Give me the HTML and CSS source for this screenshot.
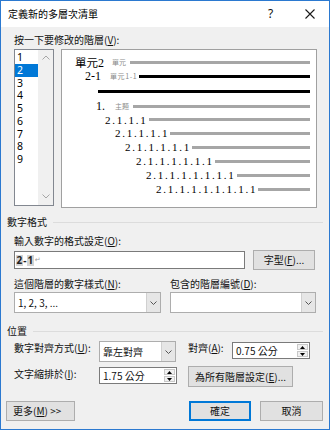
FILE: index.html
```html
<!DOCTYPE html>
<html lang="zh-Hant">
<head>
<meta charset="utf-8">
<link rel="stylesheet" href="styles.css">
</head>
<body>
<div class="win">
  <div class="titlebar">
    <span class="title">定義新的多層次清單</span>
    <span class="help">?</span>
    <svg class="close" width="10" height="10" viewBox="0 0 10 10"><path d="M0.5 0.5L9.5 9.5M9.5 0.5L0.5 9.5" stroke="#1a1a1a" stroke-width="1.1" fill="none"/></svg>
  </div>
  <div class="content">
    <div class="l-click">按一下要修改的階層(<u>V</u>):</div>
    <div class="top">
      <div class="listbox">
        <ul class="items">
          <li>1</li><li class="sel">2</li><li>3</li><li>4</li><li>5</li><li>6</li><li>7</li><li>8</li><li>9</li>
        </ul>
        <div class="vscroll">
          <svg width="8" height="5" viewBox="0 0 8 5"><path d="M0.5 4.5L4 1L7.5 4.5" stroke="#a6a6a6" fill="none"/></svg>
          <svg width="8" height="5" viewBox="0 0 8 5"><path d="M0.5 0.5L4 4L7.5 0.5" stroke="#a6a6a6" fill="none"/></svg>
        </div>
      </div>
      <div class="preview">
        <div class="pv r1"><span class="big">單元<span class="ser">2</span></span><span class="tag t1">單元</span><span class="bar"></span></div>
        <div class="pv r2"><span class="big ser">2-1</span><span class="tag t2">單元1-1</span><span class="bar blk b2"></span></div>
        <div class="pv r3"><span class="bar blk b3"></span></div>
        <div class="pv r4"><span class="big ser">1.</span><span class="tag t4">主題</span><span class="bar"></span></div>
        <div class="pv r5"><span class="seq">2.1.1.1</span><span class="bar"></span></div>
        <div class="pv r6"><span class="seq">2.1.1.1.1</span><span class="bar"></span></div>
        <div class="pv r7"><span class="seq">2.1.1.1.1.1</span><span class="bar"></span></div>
        <div class="pv r8"><span class="seq">2.1.1.1.1.1.1</span><span class="bar"></span></div>
        <div class="pv r9"><span class="seq">2.1.1.1.1.1.1.1</span><span class="bar"></span></div>
        <div class="pv r10"><span class="seq">2.1.1.1.1.1.1.1.1</span><span class="bar"></span></div>
      </div>
    </div>

    <div class="group g1">數字格式</div>
    <div class="l-fmt">輸入數字的格式設定(<u>O</u>):</div>
    <div class="fmt-row">
      <div class="fmt-input"><span class="fld">2</span><span class="dash">-</span><span class="fld">1</span><span class="ret">↵</span></div>
      <div class="btn btn-font">字型(<u>F</u>)...</div>
    </div>
    <div class="two-col style-labels">
      <div>這個階層的數字樣式(<u>N</u>):</div>
      <div>包含的階層編號(<u>D</u>):</div>
    </div>
    <div class="two-col selects">
      <div class="select"><span class="val">1, 2, 3, ...</span><span class="dd"><svg width="7" height="4" viewBox="0 0 7 4"><path d="M0.5 0.5L3.5 3.5L6.5 0.5" stroke="#555" fill="none"/></svg></span></div>
      <div class="select"><span class="val"></span><span class="dd"><svg width="7" height="4" viewBox="0 0 7 4"><path d="M0.5 0.5L3.5 3.5L6.5 0.5" stroke="#555" fill="none"/></svg></span></div>
    </div>

    <div class="group g2">位置</div>
    <div class="pos">
      <div class="p-lbl1">數字對齊方式(<u>U</u>):</div>
      <div class="select p-align"><span class="val">靠左對齊</span><span class="dd"><svg width="7" height="4" viewBox="0 0 7 4"><path d="M0.5 0.5L3.5 3.5L6.5 0.5" stroke="#555" fill="none"/></svg></span></div>
      <div class="p-lbl2">對齊(<u>A</u>):</div>
      <div class="spin p-at"><span class="val">0.75 公分</span><span class="arrows"><span class="ar"><svg width="5" height="3" viewBox="0 0 5 3"><path d="M0 3L2.5 0L5 3Z" fill="#000"/></svg></span><span class="ar"><svg width="5" height="3" viewBox="0 0 5 3"><path d="M0 0L2.5 3L5 0Z" fill="#000"/></svg></span></span></div>
      <div class="p-lbl3">文字縮排於(<u>I</u>):</div>
      <div class="spin p-indent"><span class="val">1.75 公分</span><span class="arrows"><span class="ar"><svg width="5" height="3" viewBox="0 0 5 3"><path d="M0 3L2.5 0L5 3Z" fill="#000"/></svg></span><span class="ar"><svg width="5" height="3" viewBox="0 0 5 3"><path d="M0 0L2.5 3L5 0Z" fill="#000"/></svg></span></span></div>
      <div class="btn p-all">為所有階層設定(<u>E</u>)...</div>
    </div>

    <div class="bottom">
      <div class="btn btn-more">更多(<u>M</u>) &gt;&gt;</div>
      <div class="spacer"></div>
      <div class="btn btn-ok">確定</div>
      <div class="btn btn-cancel">取消</div>
    </div>
  </div>
</div>
</body>
</html>
```
FILE: styles.css
```css
* { box-sizing: border-box; margin: 0; padding: 0; }
html, body { width: 330px; height: 430px; overflow: hidden; }
body {
  font-family: "Noto Sans CJK TC", "Noto Sans", sans-serif;
  font-size: 10px;
  line-height: 14px;
  color: #111;
  background: #f0f0f0;
}
u { text-decoration: underline; text-underline-offset: 1px; }

.win {
  width: 330px;
  height: 430px;
  border: 1px solid #2b79d0;
  background: #f0f0f0;
  display: flex;
  flex-direction: column;
}
.titlebar {
  flex: none;
  height: 26px;
  background: #fff;
  display: flex;
  align-items: center;
  padding-left: 7px;
}
.title { flex: 1; font-size: 10px; color: #000; }
.help {
  font-family: "Noto Sans", sans-serif;
  font-size: 12px;
  width: 6px;
  margin-right: 31px;
  color: #111;
}
.close { margin-right: 14px; }

.content {
  flex: 1;
  display: flex;
  flex-direction: column;
  padding: 0 6px 0 13px;
}
.l-click { margin-top: 6px; }

.top { display: flex; align-items: flex-start; gap: 7px; margin-top: 2px; }
.listbox {
  width: 40px;
  height: 157px;
  border: 1px solid #828790;
  background: #fff;
  display: flex;
}
.items { list-style: none; width: 23px; padding-top: 1px; }
.items li {
  height: 12.75px;
  line-height: 12.75px;
  padding-left: 2px;
  font-family: "Noto Sans", sans-serif;
  font-size: 10.5px;
  color: #000;
}
.items li.sel { background: #0078d7; color: #fff; }
.vscroll {
  flex: 1;
  background: #f0f0f0;
  display: flex;
  flex-direction: column;
  justify-content: space-between;
  align-items: center;
  padding: 5px 0 6px;
}

.preview {
  width: 256px;
  height: 159px;
  border: 1px solid #a0a0a0;
  background: #fff;
  padding: 5px 6px 0 0;
  color: #000;
}
.pv { display: flex; align-items: center; height: 14px; }
.r1 { padding-left: 13px; }
.r2 { padding-left: 23px; }
.r3 { padding-left: 36px; height: 16px; }
.r4 { padding-left: 34px; }
.r5 { padding-left: 43px; height: 13px; }
.r6 { padding-left: 53px; }
.r7 { padding-left: 63px; }
.r8 { padding-left: 74px; }
.r9 { padding-left: 84px; }
.r10 { padding-left: 94px; }
.big { font-size: 11.5px; }
.ser { font-family: "Liberation Serif", serif; font-size: 12px; }
.tag { font-size: 7px; color: #8c8c8c; line-height: 10px; }
.t1 { margin-left: 8px; }
.t2 { margin-left: 9px; letter-spacing: 0.6px; }
.t4 { margin-left: 10px; }
.bar { flex: 1; height: 3px; background: #a6a6a6; margin-left: 4px; }
.bar.blk { background: #000; }
.b2 { margin-left: 2px; }
.b3 { margin-left: 0; }
.seq {
  font-family: "Liberation Serif", serif;
  font-size: 11px;
  letter-spacing: 1.75px;
}
.seq + .bar { margin-left: 1px; }

.group {
  display: flex;
  align-items: center;
  gap: 6px;
  margin-left: -7px;
}
.group::after { content: ""; flex: 1; height: 1px; background: #dcdcdc; }
.g1 { margin-top: 7px; }
.g2 { margin-top: 11px; }

.l-fmt { margin-top: 5px; }
.fmt-row { display: flex; align-items: center; gap: 8px; height: 20px; margin-top: 2px; }
.fmt-input {
  width: 231px;
  height: 18px;
  border: 1px solid #7a7a7a;
  background: #fff;
  display: flex;
  align-items: center;
  padding-left: 1px;
  font-family: "Noto Sans", sans-serif;
  font-weight: 700;
  font-size: 10px;
  color: #222;
}
.fld { background: #d4d4d4; line-height: 11px; padding: 0 0.5px; }
.dash { padding: 0 0.5px; }
.ret { font-family: "DejaVu Sans", sans-serif; font-weight: 400; font-size: 7px; color: #999; margin-left: 1px; }

.btn {
  height: 20px;
  border: 1px solid #adadad;
  background: #e1e1e1;
  display: flex;
  align-items: center;
  justify-content: center;
  white-space: nowrap;
  color: #111;
}
.btn-font { width: 62px; }

.two-col { display: grid; grid-template-columns: 147px 146px; column-gap: 9px; }
.style-labels { margin-top: 7px; }
.selects { margin-top: 1px; }
.select {
  height: 21px;
  border: 1px solid #adadad;
  background: #fff;
  display: flex;
}
.select .val { flex: 1; padding-left: 3px; line-height: 19px; }
.select .dd {
  width: 14px;
  background: #e6e6e6;
  border-left: 1px solid #d0d0d0;
  display: flex;
  align-items: center;
  justify-content: center;
}

.pos {
  display: grid;
  grid-template-columns: 85px 78px 11px 44px 78px;
  grid-template-rows: 21px 21px;
  row-gap: 4px;
  margin-top: 3px;
  align-items: start;
}
.p-lbl1 { grid-column: 1; grid-row: 1; }
.p-align { grid-column: 2; grid-row: 1; width: 77px; }
.p-lbl2 { grid-column: 4; grid-row: 1; }
.p-at { grid-column: 5; grid-row: 1; }
.p-lbl3 { grid-column: 1; grid-row: 2; margin-top: 1px; }
.p-indent { grid-column: 2; grid-row: 2; }
.p-all { grid-column: 4 / span 2; grid-row: 2; width: 105px; height: 21px; }

.spin {
  height: 17px;
  margin-top: 1px;
  border: 1px solid #7a7a7a;
  background: #fff;
  display: flex;
}
.spin .val { flex: 1; padding-left: 3px; line-height: 15px; }
.arrows {
  width: 12px;
  display: flex;
  flex-direction: column;
  gap: 1px;
  padding: 1px 1px 1px 0;
}
.ar {
  flex: 1;
  background: #f0f0f0;
  border: 1px solid #c8c8c8;
  display: flex;
  align-items: center;
  justify-content: center;
}

.bottom { display: flex; align-items: center; margin-top: 14px; }
.btn-more { width: 69px; margin-left: -8px; justify-content: flex-start; padding-left: 6px; }
.spacer { flex: 1; }
.btn-ok { width: 62px; border-color: #0078d7; box-shadow: inset 0 0 0 1px #0078d7; }
.btn-cancel { width: 63px; margin-left: 9px; }
```
